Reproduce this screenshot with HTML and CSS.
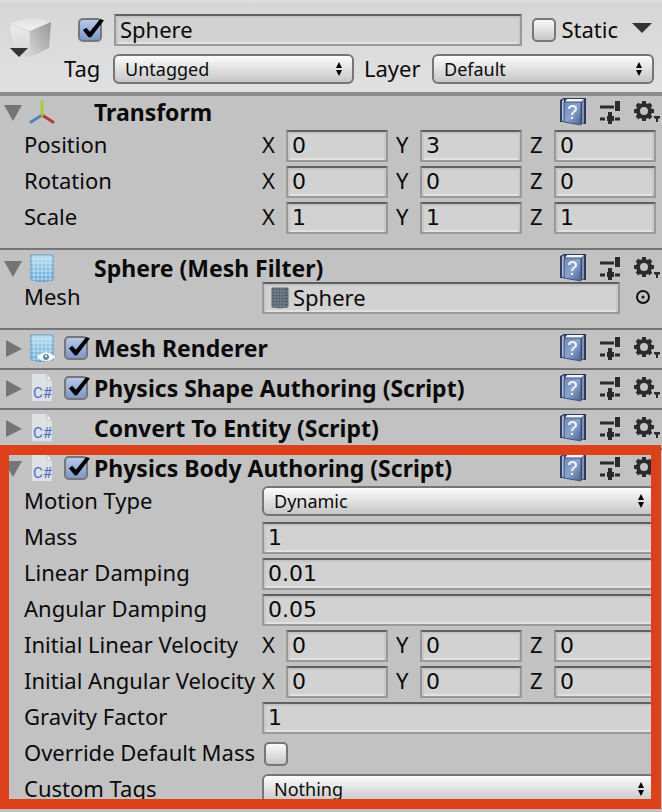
FILE: index.html
```
<!DOCTYPE html>
<html lang="en">
<head>
  <meta charset="UTF-8" />
  <meta name="viewport" content="width=device-width, initial-scale=1.0"/>
  <title>Inspector</title>
  <link rel="stylesheet" href="styles.css">
</head>
<body>
  <!-- shared icons -->
  <svg width="0" height="0" class="defs">
    <defs>
      <linearGradient id="bookFill" x1="0" y1="0" x2="1" y2="1">
        <stop offset="0" stop-color="#6f8abb"/>
        <stop offset=".5" stop-color="#8aa2cb"/>
        <stop offset="1" stop-color="#47618f"/>
      </linearGradient>
      <linearGradient id="meshFill" x1="0" y1="0" x2="0" y2="1">
        <stop offset="0" stop-color="#b5dcf1"/>
        <stop offset="1" stop-color="#5ba0d6"/>
      </linearGradient>
      <symbol id="book" viewBox="0 0 26 28">
        <path d="M3 0H26V26H22L4 24Z" fill="#2c3a5a"/>
        <path d="M7 1H24L21 4H5Z" fill="#f4f6fa"/>
        <path d="M22 4L24 1V25L22 26Z" fill="#8494b8"/>
        <path d="M0 2L4 0V24L0 24Z" fill="#2f3e61"/>
        <path d="M2 3L4 1V23H2Z" fill="#b9c6df"/>
        <path d="M4 4H21V27L4 24Z" fill="url(#bookFill)" stroke="#405580"/>
        <path d="M9 11C9 7 16 7 16 11C16 14 12 13 12 17" fill="none" stroke="#f2f5fb" stroke-width="2"/>
        <rect x="11" y="19" width="2" height="2" fill="#f2f5fb"/>
      </symbol>
      <symbol id="sliders" viewBox="0 0 20 24">
        <path d="M0 7H14M0 19H5M15 19H20" stroke="#2a2a2a" stroke-width="3"/>
        <path d="M15 1H20V11H15ZM8 12H12V24H8ZM7 16H14V21H7Z" fill="#2a2a2a"/>
      </symbol>
      <symbol id="gear" viewBox="0 0 26 24">
        <circle cx="10" cy="11" r="6" fill="none" stroke="#2c2c2c" stroke-width="4"/>
        <path d="M10 1V5M10 17V21M0 11H4M16 11H20M3 4L6 7M14 15L17 18M3 18L6 15M14 7L17 4" stroke="#2c2c2c" stroke-width="4"/>
        <path d="M20 16H26V18L24 19V22H22V19L20 18Z" fill="#2c2c2c"/>
      </symbol>
      <symbol id="mesh" viewBox="0 0 24 28">
        <path d="M1 1H23V26Q12 29 1 26Z" fill="url(#meshFill)" stroke="#5b98c4"/>
        <path d="M4 1V27M8 1V27M12 1V28M16 1V27M20 1V27M1 5H23M1 9H23M1 13H23M1 17H23M1 21H23M1 25H23" stroke="#d8eefa" stroke-width="1" opacity=".75"/>
      </symbol>
      <symbol id="script" viewBox="0 0 20 28">
        <path d="M0 0H15L20 6V28H0Z" fill="#dce1e3"/>
        <path d="M15 0V6H20Z" fill="#f5f7f8" stroke="#b9bec0"/>
        <path d="M0 28H20" stroke="#a8acae"/>
        <text x="1" y="24" font-size="15" fill="#4c6cc8">C#</text>
      </symbol>
      <symbol id="fold-open" viewBox="0 0 18 18"><path d="M0 2H18L9 18Z" fill="#757575"/></symbol>
      <symbol id="fold-shut" viewBox="0 0 18 18"><path d="M2 1L18 10L2 18Z" fill="#757575"/></symbol>
      <symbol id="updown" viewBox="0 0 6 14"><path d="M0 6L3 0L6 6ZM0 8H6L3 14Z" fill="#000"/></symbol>
    </defs>
  </svg>

  <header class="object-header">
    <svg class="cube" viewBox="0 0 44 44">
      <defs>
        <linearGradient id="cubeTop" x1="0" y1="0" x2="0" y2="1">
          <stop offset="0" stop-color="#dadada"/>
          <stop offset="1" stop-color="#f4f4f4"/>
        </linearGradient>
        <linearGradient id="cubeLeft" x1="0" y1="0" x2="0" y2="1">
          <stop offset="0" stop-color="#ececec"/>
          <stop offset="1" stop-color="#d2d2d2"/>
        </linearGradient>
        <linearGradient id="cubeRight" x1="0" y1="1" x2="1" y2="0">
          <stop offset="0" stop-color="#d6d6d6"/>
          <stop offset="1" stop-color="#969696"/>
        </linearGradient>
      </defs>
      <path d="M1 10L23 2L43 8L22 17Z" fill="url(#cubeTop)"/>
      <path d="M1 10L22 17V43L4 34Z" fill="url(#cubeLeft)" stroke="#c4c4c4" stroke-width=".5"/>
      <path d="M22 17L43 8L41 34L22 43Z" fill="url(#cubeRight)"/>
      <path d="M2 34H20L11 43Z" fill="#333"/>
    </svg>
    <div class="object-fields">
      <div class="name-row">
        <input type="checkbox" class="check" aria-label="Active" checked>
        <input type="text" class="field" aria-label="Name" value="Sphere">
        <input type="checkbox" class="check" id="static">
        <label for="static">Static</label>
        <button class="static-menu" aria-label="Static options"></button>
      </div>
      <div class="tag-row">
        <label for="tag">Tag</label>
        <div class="select"><select id="tag"><option>Untagged</option></select><svg><use href="#updown"/></svg></div>
        <label for="layer" class="layer-label">Layer</label>
        <div class="select layer"><select id="layer"><option>Default</option></select><svg><use href="#updown"/></svg></div>
      </div>
    </div>
  </header>

  <section class="component first">
    <div class="title">
      <svg class="fold"><use href="#fold-open"/></svg>
      <svg class="type-icon" viewBox="0 0 28 28">
        <path d="M14 17L3 24" stroke="#4b86bd" stroke-width="3" stroke-linecap="round"/>
        <path d="M14 17L25 24" stroke="#b53a35" stroke-width="3" stroke-linecap="round"/>
        <path d="M14 17V3" stroke="#a5cc3a" stroke-width="3" stroke-linecap="round"/>
      </svg>
      <span class="enable"></span>
      <h2>Transform</h2>
      <button aria-label="Help"><svg class="book"><use href="#book"/></svg></button>
      <button aria-label="Presets"><svg class="sliders"><use href="#sliders"/></svg></button>
      <button aria-label="Settings"><svg class="gear"><use href="#gear"/></svg></button>
    </div>
    <div class="rows">
      <div class="row">
        <span class="label">Position</span>
        <div class="vector">
          <label>X<input type="text" class="field number" value="0"></label>
          <label>Y<input type="text" class="field number" value="3"></label>
          <label>Z<input type="text" class="field number" value="0"></label>
        </div>
      </div>
      <div class="row">
        <span class="label">Rotation</span>
        <div class="vector">
          <label>X<input type="text" class="field number" value="0"></label>
          <label>Y<input type="text" class="field number" value="0"></label>
          <label>Z<input type="text" class="field number" value="0"></label>
        </div>
      </div>
      <div class="row">
        <span class="label">Scale</span>
        <div class="vector">
          <label>X<input type="text" class="field number" value="1"></label>
          <label>Y<input type="text" class="field number" value="1"></label>
          <label>Z<input type="text" class="field number" value="1"></label>
        </div>
      </div>
    </div>
  </section>

  <section class="component mesh-filter">
    <div class="title">
      <svg class="fold"><use href="#fold-open"/></svg>
      <svg class="type-icon"><use href="#mesh"/></svg>
      <span class="enable"></span>
      <h2>Sphere (Mesh Filter)</h2>
      <button aria-label="Help"><svg class="book"><use href="#book"/></svg></button>
      <button aria-label="Presets"><svg class="sliders"><use href="#sliders"/></svg></button>
      <button aria-label="Settings"><svg class="gear"><use href="#gear"/></svg></button>
    </div>
    <div class="rows">
      <div class="row">
        <label class="label" for="mesh-field">Mesh</label>
        <div class="field object">
          <svg viewBox="0 0 18 22">
            <path d="M1 1H17V20Q9 22 1 20Z" fill="#4d5a63" stroke="#5d6a72"/>
            <path d="M4 1V21M7 1V21M10 1V21M13 1V21M1 4H17M1 7H17M1 10H17M1 13H17M1 16H17M1 19H17" stroke="#8d9aa3" stroke-width="1" opacity=".7"/>
          </svg>
          <input type="text" id="mesh-field" value="Sphere">
        </div>
        <button class="picker" aria-label="Select mesh">
          <svg viewBox="0 0 16 16"><circle cx="8" cy="7" r="6" fill="none" stroke="#111" stroke-width="2"/><circle cx="8" cy="7" r="1.5" fill="#111"/></svg>
        </button>
      </div>
    </div>
  </section>

  <section class="component">
    <div class="title">
      <svg class="fold"><use href="#fold-shut"/></svg>
      <svg class="type-icon" viewBox="0 0 28 28">
        <use href="#mesh" x="2" width="24" height="28"/>
        <path d="M9 23Q18 14 27 23Q18 31 9 23Z" fill="#fff" stroke="#e4e4e4"/>
        <circle cx="18" cy="23" r="3" fill="#5f89aa"/>
        <circle cx="18" cy="22" r="1" fill="#fff"/>
      </svg>
      <span class="enable"><input type="checkbox" class="check" id="renderer" checked></span>
      <h2><label for="renderer">Mesh Renderer</label></h2>
      <button aria-label="Help"><svg class="book"><use href="#book"/></svg></button>
      <button aria-label="Presets"><svg class="sliders"><use href="#sliders"/></svg></button>
      <button aria-label="Settings"><svg class="gear"><use href="#gear"/></svg></button>
    </div>
  </section>

  <section class="component">
    <div class="title">
      <svg class="fold"><use href="#fold-shut"/></svg>
      <svg class="type-icon script"><use href="#script"/></svg>
      <span class="enable"><input type="checkbox" class="check" id="shape" checked></span>
      <h2><label for="shape">Physics Shape Authoring (Script)</label></h2>
      <button aria-label="Help"><svg class="book"><use href="#book"/></svg></button>
      <button aria-label="Presets"><svg class="sliders"><use href="#sliders"/></svg></button>
      <button aria-label="Settings"><svg class="gear"><use href="#gear"/></svg></button>
    </div>
  </section>

  <section class="component">
    <div class="title">
      <svg class="fold"><use href="#fold-shut"/></svg>
      <svg class="type-icon script"><use href="#script"/></svg>
      <span class="enable"></span>
      <h2>Convert To Entity (Script)</h2>
      <button aria-label="Help"><svg class="book"><use href="#book"/></svg></button>
      <button aria-label="Presets"><svg class="sliders"><use href="#sliders"/></svg></button>
      <button aria-label="Settings"><svg class="gear"><use href="#gear"/></svg></button>
    </div>
  </section>

  <section class="component highlighted">
    <div class="title">
      <svg class="fold"><use href="#fold-open"/></svg>
      <svg class="type-icon script"><use href="#script"/></svg>
      <span class="enable"><input type="checkbox" class="check" id="body" checked></span>
      <h2><label for="body">Physics Body Authoring (Script)</label></h2>
      <button aria-label="Help"><svg class="book"><use href="#book"/></svg></button>
      <button aria-label="Presets"><svg class="sliders"><use href="#sliders"/></svg></button>
      <button aria-label="Settings"><svg class="gear"><use href="#gear"/></svg></button>
    </div>
    <div class="rows">
      <div class="row">
        <label class="label" for="motion">Motion Type</label>
        <div class="select"><select id="motion"><option>Dynamic</option></select><svg><use href="#updown"/></svg></div>
      </div>
      <div class="row">
        <label class="label" for="mass">Mass</label>
        <input type="text" class="field number" id="mass" value="1">
      </div>
      <div class="row">
        <label class="label" for="linear">Linear Damping</label>
        <input type="text" class="field number" id="linear" value="0.01">
      </div>
      <div class="row">
        <label class="label" for="angular">Angular Damping</label>
        <input type="text" class="field number" id="angular" value="0.05">
      </div>
      <div class="row">
        <span class="label">Initial Linear Velocity</span>
        <div class="vector">
          <label>X<input type="text" class="field number" value="0"></label>
          <label>Y<input type="text" class="field number" value="0"></label>
          <label>Z<input type="text" class="field number" value="0"></label>
        </div>
      </div>
      <div class="row">
        <span class="label">Initial Angular Velocity</span>
        <div class="vector">
          <label>X<input type="text" class="field number" value="0"></label>
          <label>Y<input type="text" class="field number" value="0"></label>
          <label>Z<input type="text" class="field number" value="0"></label>
        </div>
      </div>
      <div class="row">
        <label class="label" for="gravity">Gravity Factor</label>
        <input type="text" class="field number" id="gravity" value="1">
      </div>
      <div class="row">
        <label class="label" for="override">Override Default Mass</label>
        <input type="checkbox" class="check in-row" id="override">
      </div>
      <div class="row">
        <label class="label" for="tags">Custom Tags</label>
        <div class="select"><select id="tags"><option>Nothing</option></select><svg><use href="#updown"/></svg></div>
      </div>
    </div>
  </section>
</body>
</html>
```
FILE: styles.css
```
* {
  box-sizing: border-box;
}

body {
  margin: 0;
  font-family: "Noto Sans", sans-serif;
  font-size: 22px;
  line-height: 28px;
  color: #0a0a0a;
  background: #c2c2c2;
  overflow: hidden;
}

.defs {
  position: absolute;
}

input, select, button {
  font-family: inherit;
  font-size: inherit;
  color: inherit;
  margin: 0;
}

button {
  padding: 0;
  border: none;
  background: none;
  cursor: pointer;
}

svg {
  display: block;
  flex-shrink: 0;
}

/* fields */

.field {
  min-width: 0;
  width: 100%;
  height: 32px;
  padding: 0 4px 2px;
  border: 2px solid #999;
  border-top-color: #606060;
  border-radius: 0;
  background: #d2d2d2;
  box-shadow: inset 0 2px #c4c4c4, inset 2px 0 #c8c8c8, inset -2px 0 #c8c8c8, inset 0 -2px #e2e2e2;
  outline: none;
}

.number {
  font-family: "DejaVu Sans", sans-serif;
}

.select {
  position: relative;
  flex: 1;
  min-width: 0;
}

.select select {
  display: block;
  appearance: none;
  width: 100%;
  height: 30px;
  padding: 0 10px;
  font-size: 18px;
  line-height: 24px;
  border: 2px solid #757575;
  border-radius: 6px;
  background: linear-gradient(#fcfcfc, #c6c6c6);
}

.select svg {
  position: absolute;
  top: 8px;
  right: 12px;
  width: 6px;
  height: 14px;
  pointer-events: none;
}

.check {
  appearance: none;
  flex-shrink: 0;
  width: 24px;
  height: 24px;
  border: 2px solid #777;
  border-radius: 5px;
  background: linear-gradient(#fafafa, #c8c8c8);
}

.check:checked {
  position: relative;
  background: linear-gradient(#b7c8e8, #7f97c9);
}

.check:checked::after {
  content: "";
  position: absolute;
  inset: -2px -4px 0 0;
  background: #000;
  clip-path: polygon(12% 56%, 26% 44%, 41% 62%, 84% 4%, 100% 10%, 46% 88%, 36% 88%);
}

/* object header */

.object-header {
  display: flex;
  gap: 12px;
  padding: 12px 8px 8px;
  background: linear-gradient(#d6d6d6, #e0e0e0);
  border-top: 2px solid #dedede;
  border-bottom: 2px solid #8c8c8c;
}

.cube {
  width: 44px;
  height: 44px;
}

.object-fields {
  flex: 1;
  display: flex;
  flex-direction: column;
  gap: 8px;
}

.name-row {
  display: flex;
  align-items: center;
  padding-left: 14px;
}

.name-row .field {
  flex: 1;
  margin: 0 10px 0 12px;
}

.name-row label {
  margin: 0 0 2px 5px;
}

.static-menu {
  width: 20px;
  height: 10px;
  margin: 0 2px 4px 14px;
  background: #333;
  clip-path: polygon(0 0, 100% 0, 50% 100%);
}

.tag-row {
  display: flex;
  align-items: flex-start;
}

.tag-row label {
  width: 49px;
}

.tag-row .layer-label {
  width: 68px;
  margin-left: 10px;
}

.tag-row .layer {
  flex: 0 0 222px;
}

/* components */

.component {
  border-top: 2px solid #757575;
  padding-bottom: 6px;
}

.component:has(.rows) {
  padding-bottom: 14px;
}

.component.first {
  border-top-color: #8c8c8c;
}

.title {
  display: flex;
  align-items: center;
  height: 32px;
  padding: 4px 2px 0 4px;
}

.first .title {
  height: 30px;
  padding-top: 2px;
}

.title h2 {
  flex: 1;
  margin: 0;
  font-size: 23px;
  line-height: 28px;
  white-space: nowrap;
}

.fold {
  width: 18px;
  height: 18px;
}

.type-icon {
  width: 28px;
  height: 28px;
  margin: 0 8px 0 6px;
}

.type-icon.script {
  font-family: Roboto, sans-serif;
}

.enable {
  display: flex;
  width: 30px;
}

.book {
  width: 26px;
  height: 28px;
  margin-right: 14px;
}

.sliders {
  width: 20px;
  height: 24px;
  margin-right: 14px;
}

.gear {
  width: 26px;
  height: 24px;
}

.rows {
  display: flex;
  flex-direction: column;
  gap: 4px;
  padding: 4px 6px 0 24px;
}

.mesh-filter .rows {
  padding-top: 0;
}

.row {
  display: flex;
  align-items: flex-start;
  height: 32px;
}

.label {
  flex: 0 0 238px;
  white-space: nowrap;
}

.vector {
  flex: 1;
  display: flex;
  gap: 8px;
}

.vector label {
  flex: 1;
  display: grid;
  grid-template-columns: 24px 1fr;
}

.object {
  flex: 1;
  display: flex;
  align-items: center;
  gap: 4px;
  padding: 0 7px;
}

.object svg {
  width: 18px;
  height: 22px;
}

.object input {
  flex: 1;
  min-width: 0;
  padding: 0 0 2px;
  border: none;
  background: none;
  outline: none;
}

.picker {
  width: 36px;
  height: 32px;
  padding-left: 15px;
}

.picker svg {
  width: 16px;
  height: 16px;
}

.check.in-row {
  margin: 4px 2px;
}

/* red frame drawn over the physics body component */

.highlighted {
  position: relative;
}

.component.highlighted {
  padding-bottom: 3px;
}

.highlighted::after {
  content: "";
  position: absolute;
  inset: -5px 1px 0 0;
  border: 10px solid #dd411b;
  border-left-width: 9px;
  pointer-events: none;
}
```
